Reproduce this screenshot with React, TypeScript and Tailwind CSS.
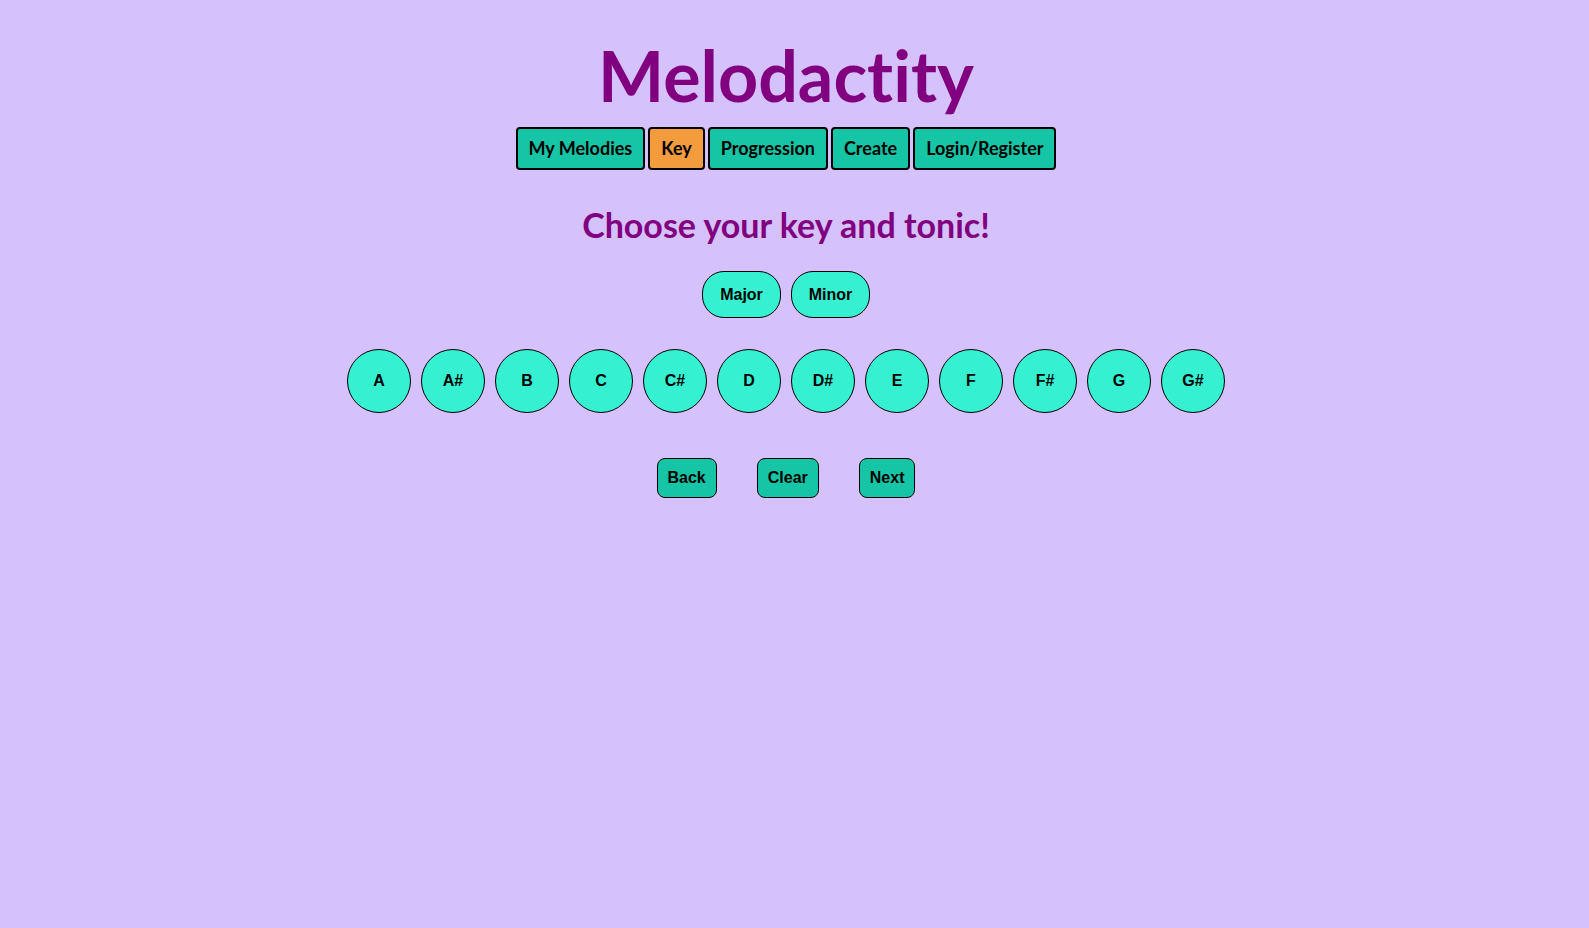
const NOTES = ["A", "A#", "B", "C", "C#", "D", "D#", "E", "F", "F#", "G", "G#"];

const NAV = [
  { label: "My Melodies", active: false },
  { label: "Key", active: true },
  { label: "Progression", active: false },
  { label: "Create", active: false },
  { label: "Login/Register", active: false },
];

export default function App() {
  return (
    <div className="min-h-screen w-full bg-[#d5c1fb] pr-[17px] font-['Lato',sans-serif] [font-variant-ligatures:none]">
      <div className="flex flex-col items-center">
        <h1 className="mt-[30px] text-[70px] leading-[90px] font-bold text-[#800080]">
          Melodactity
        </h1>

        <nav className="mt-[7px] flex gap-[3px]">
          {NAV.map((n) => (
            <button
              key={n.label}
              className={
                "h-[43px] rounded-[4px] border-2 border-black px-[11px] text-[18px] font-bold text-black " +
                (n.active ? "bg-[#f39c3e]" : "bg-[#16c5a5]")
              }
            >
              {n.label}
            </button>
          ))}
        </nav>

        <h2 className="mt-[33px] text-[34px] leading-[44px] font-bold text-[#800080]">
          Choose your key and tonic!
        </h2>

        <div className="mt-[24px] flex gap-[10px] font-['Liberation_Sans',Arial,sans-serif]">
          <button className="h-[47px] w-[79px] rounded-[22px] border border-black bg-[#35f1d1] text-[16px] font-bold text-black">
            Major
          </button>
          <button className="h-[47px] w-[79px] rounded-[22px] border border-black bg-[#35f1d1] text-[16px] font-bold text-black">
            Minor
          </button>
        </div>

        <div className="mt-[31px] flex gap-[10px] font-['Liberation_Sans',Arial,sans-serif]">
          {NOTES.map((n) => (
            <button
              key={n}
              className="h-[64px] w-[64px] rounded-full border border-black bg-[#35f1d1] text-[16px] font-bold text-black"
            >
              {n}
            </button>
          ))}
        </div>

        <div className="mt-[45px] flex gap-[40px] font-['Liberation_Sans',Arial,sans-serif]">
          {["Back", "Clear", "Next"].map((b) => (
            <button
              key={b}
              className="h-[40px] rounded-[8px] border border-black bg-[#16c5a5] px-[10px] text-[16px] font-bold text-black"
            >
              {b}
            </button>
          ))}
        </div>
      </div>
    </div>
  );
}
